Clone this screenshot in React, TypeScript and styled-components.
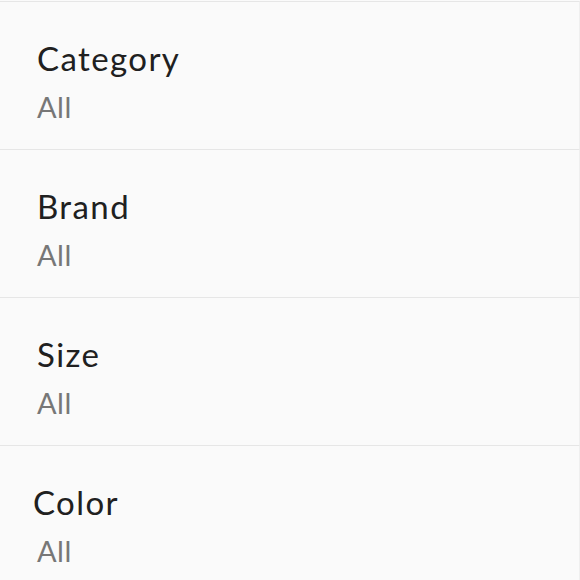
import React from 'react';
import styled, { createGlobalStyle } from 'styled-components';

const filters = [
  { name: 'Category', value: 'All' },
  { name: 'Brand', value: 'All' },
  { name: 'Size', value: 'All' },
  { name: 'Color', value: 'All', shift: -4 },
];

export default function App() {
  return (
    <>
      <GlobalStyle />
      <FilterList>
        {filters.map((f) => (
          <FilterRow key={f.name}>
            <FilterName $shift={f.shift ?? 0}>{f.name}</FilterName>
            <FilterValue>{f.value}</FilterValue>
          </FilterRow>
        ))}
      </FilterList>
    </>
  );
}

const GlobalStyle = createGlobalStyle`
  html, body {
    margin: 0;
    padding: 0;
    background: #fafafa;
  }
  body {
    font-family: Lato, "Noto Sans", sans-serif;
    overflow: hidden;
  }
`;

const FilterList = styled.div`
  display: flex;
  flex-direction: column;
  padding-top: 1px;
`;

const FilterRow = styled.div`
  display: flex;
  flex-direction: column;
  height: 147px;
  padding: 0 37px;
  border-top: 1px solid #e6e6e6;
  border-right: 1px solid #efefef;
  background: #fafafa;
`;

const FilterName = styled.div<{ $shift: number }>`
  margin-top: 37px;
  margin-left: ${(p) => p.$shift}px;
  font-size: 33px;
  line-height: 38px;
  letter-spacing: 1.4px;
  color: #202020;
`;

const FilterValue = styled.div`
  margin-top: 13px;
  font-size: 29px;
  line-height: 34px;
  letter-spacing: 0.5px;
  color: #777;
`;
